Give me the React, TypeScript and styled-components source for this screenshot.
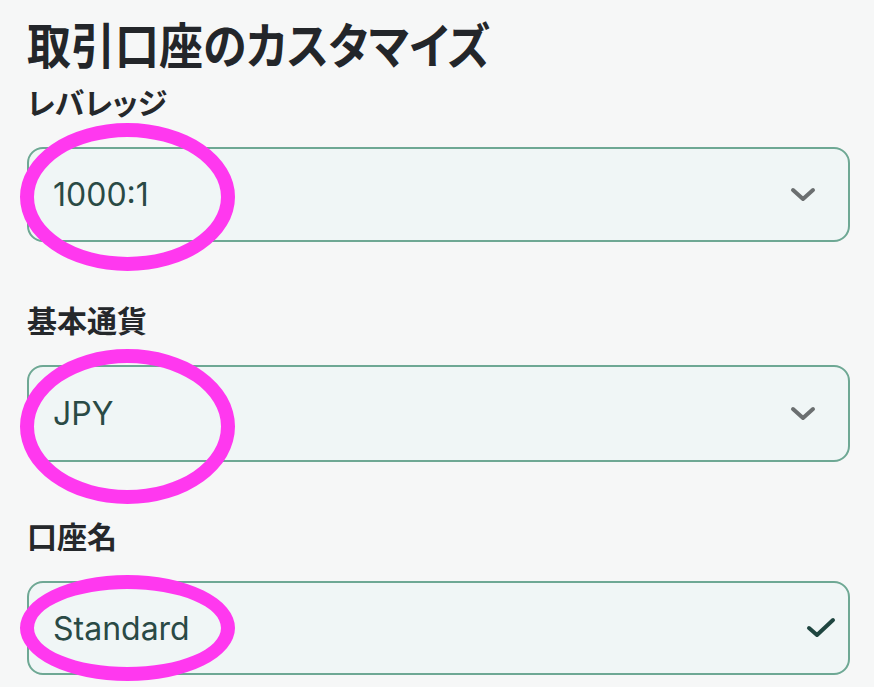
import React from "react";
import styled, { createGlobalStyle } from "styled-components";

const Global = createGlobalStyle`
  html, body { margin: 0; padding: 0; background: #f6f7f7; }
  body { font-family: "Noto Sans CJK JP", "Inter", sans-serif; }
`;

const Page = styled.div`
  width: 874px;
  height: 687px;
  overflow: hidden;
  box-sizing: border-box;
  padding: 14px 24px 0 27px;
  display: flex;
  flex-direction: column;
`;

const Title = styled.h1`
  margin: 0 0 9px;
  font-family: "Noto Sans CJK JP", sans-serif;
  font-feature-settings: "palt";
  font-size: 44px;
  line-height: 58px;
  font-weight: 600;
  color: #23262a;
  transform: scaleY(1.1);
  transform-origin: left center;
`;

const Field = styled.div<{ $gap: number }>`
  display: flex;
  flex-direction: column;
  margin-bottom: ${(p) => p.$gap}px;
`;

const Label = styled.div`
  font-family: "Noto Sans CJK JP", sans-serif;
  font-feature-settings: "palt";
  font-size: 30px;
  line-height: 40px;
  font-weight: 600;
  color: #25282b;
  margin-bottom: 26px;
`;

const Box = styled.div<{ $h: number }>`
  position: relative;
  box-sizing: border-box;
  height: ${(p) => p.$h}px;
  border: 2px solid #6ea894;
  border-radius: 16px;
  background: #f0f6f6;
  display: flex;
  align-items: center;
  justify-content: space-between;
  padding: 0 0 0 24px;
`;

const Value = styled.span`
  font-family: "Inter", "Noto Sans", sans-serif;
  font-size: 32px;
  color: #2a4a45;
`;

const Icon = styled.span<{ $right: number }>`
  display: flex;
  margin-right: ${(p) => p.$right}px;
`;

const Ring = styled.div<{ $top: number; $h: number }>`
  position: absolute;
  left: -9px;
  top: ${(p) => p.$top}px;
  width: 215px;
  height: ${(p) => p.$h}px;
  box-sizing: border-box;
  border: 14px solid #ff38ef;
  border-radius: 50%;
  pointer-events: none;
`;

const Chevron = () => (
  <Icon $right={32}>
    <svg width="26" height="16" viewBox="0 0 26 16">
      <path d="M3 3 L13 12 L23 3" fill="none" stroke="#6b6f70" strokeWidth="4" strokeLinecap="round" strokeLinejoin="round" />
    </svg>
  </Icon>
);

const Check = () => (
  <Icon $right={12}>
    <svg width="30" height="22" viewBox="0 0 30 22">
      <path d="M3 11 L11 18 L27 3" fill="none" stroke="#1f4640" strokeWidth="4" strokeLinecap="round" strokeLinejoin="round" />
    </svg>
  </Icon>
);

export default function App() {
  return (
    <>
      <Global />
      <Page>
        <Title>取引口座のカスタマイズ</Title>
        <Field $gap={57}>
          <Label>レバレッジ</Label>
          <Box $h={95}>
            <Value>1000:1</Value>
            <Chevron />
            <Ring $top={-26} $h={148} />
          </Box>
        </Field>
        <Field $gap={53}>
          <Label>基本通貨</Label>
          <Box $h={97}>
            <Value>JPY</Value>
            <Chevron />
            <Ring $top={-18} $h={155} />
          </Box>
        </Field>
        <Field $gap={0}>
          <Label>口座名</Label>
          <Box $h={94}>
            <Value>Standard</Value>
            <Check />
            <Ring $top={-8} $h={106} />
          </Box>
        </Field>
      </Page>
    </>
  );
}
